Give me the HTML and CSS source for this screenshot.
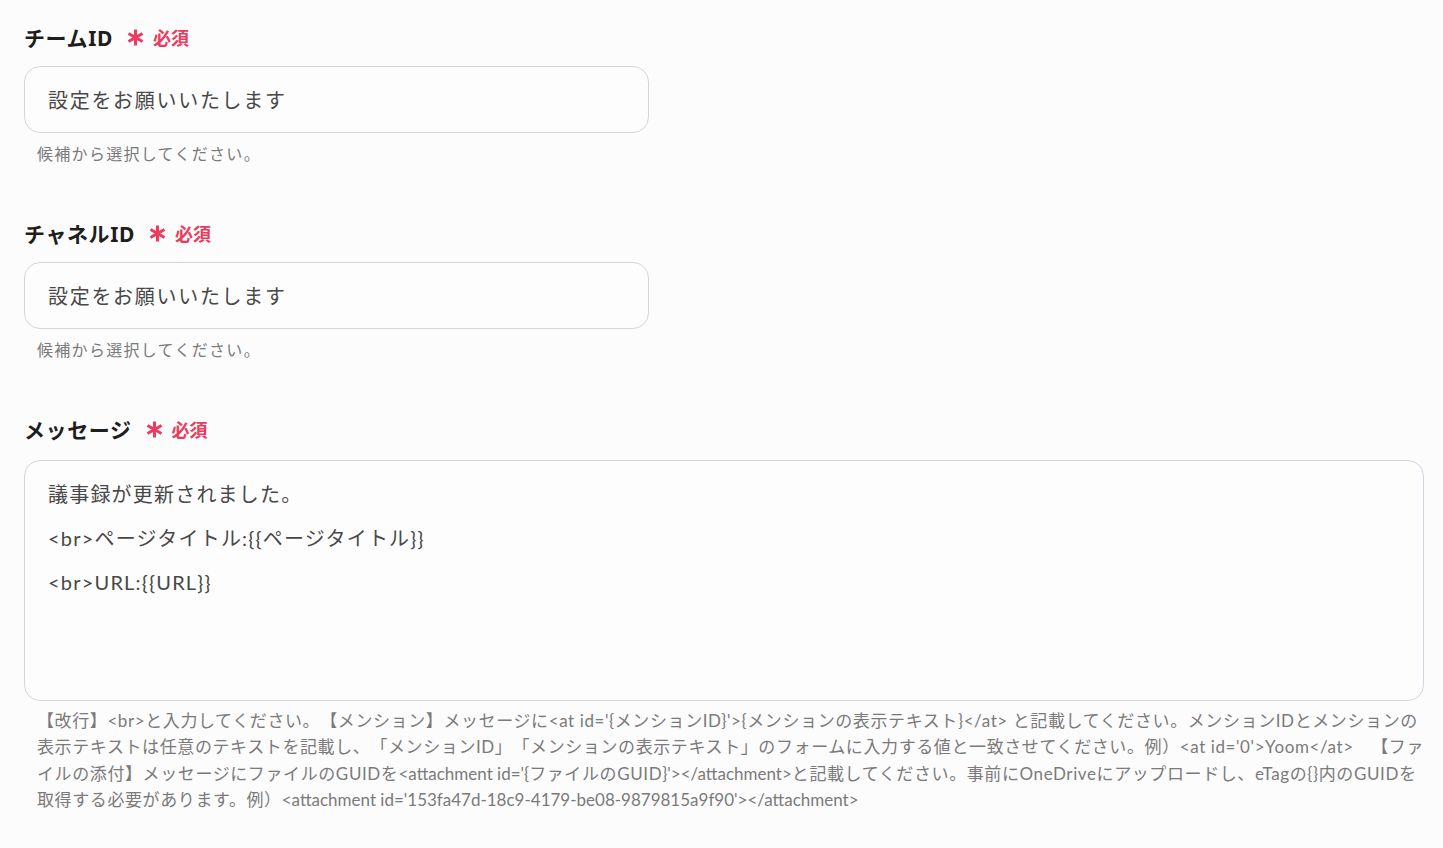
FILE: index.html
```html
<!DOCTYPE html>
<html lang="ja">
<head>
  <meta charset="UTF-8" />
  <meta name="viewport" content="width=device-width, initial-scale=1.0" />
  <title>Teams メッセージ設定</title>
  <link rel="stylesheet" href="styles.css">
</head>
<body>
  <div class="form">

    <div class="field">
      <div class="label">
        <span class="label-text">チームID</span>
        <span class="required">
          <svg class="star" viewBox="0 0 20 20"><path d="M10 1.5v17M2.6 5.75l14.8 8.5M2.6 14.25l14.8-8.5"/></svg>
          必須
        </span>
      </div>
      <div class="input">設定をお願いいたします</div>
      <p class="hint">候補から選択してください。</p>
    </div>

    <div class="field">
      <div class="label">
        <span class="label-text">チャネルID</span>
        <span class="required">
          <svg class="star" viewBox="0 0 20 20"><path d="M10 1.5v17M2.6 5.75l14.8 8.5M2.6 14.25l14.8-8.5"/></svg>
          必須
        </span>
      </div>
      <div class="input">設定をお願いいたします</div>
      <p class="hint">候補から選択してください。</p>
    </div>

    <div class="field">
      <div class="label">
        <span class="label-text">メッセージ</span>
        <span class="required">
          <svg class="star" viewBox="0 0 20 20"><path d="M10 1.5v17M2.6 5.75l14.8 8.5M2.6 14.25l14.8-8.5"/></svg>
          必須
        </span>
      </div>
      <div class="textarea">
        <div class="line">議事録が更新されました。</div>
        <div class="line">&lt;br&gt;ページタイトル:{{ページタイトル}}</div>
        <div class="line">&lt;br&gt;URL:{{URL}}</div>
      </div>
      <p class="hint hint-long">【改行】&lt;br&gt;と入力してください。【メンション】メッセージに&lt;at id='{メンションID}'&gt;{メンションの表示テキスト}&lt;/at&gt; と記載してください。メンションIDとメンションの表示テキストは任意のテキストを記載し、「メンションID」「メンションの表示テキスト」のフォームに入力する値と一致させてください。例）&lt;at id='0'&gt;Yoom&lt;/at&gt;　【ファイルの添付】メッセージにファイルのGUIDを<span class="tag">&lt;attachment id='{</span>ファイルのGUID<span class="tag">}'&gt;&lt;/attachment&gt;</span>と記載してください。事前にOneDriveにアップロードし、eTagの{}内のGUIDを取得する必要があります。例）<span class="tag">&lt;attachment id='153fa47d-18c9-4179-be08-9879815a9f90'&gt;&lt;/attachment&gt;</span></p>
    </div>

  </div>
</body>
</html>
```

FILE: styles.css
```css
:root {
  --bg: #fdfcfd;
  --field-bg: #fefdfe;
  --border: #d6d5df;
  --label: #1e1e1e;
  --text: #484848;
  --hint: #7a7a7a;
  --red: #eb3b5e;
}

html, body {
  margin: 0;
  padding: 0;
  background: var(--bg);
}

body {
  font-family: "Noto Sans", "Noto Sans CJK JP", sans-serif;
  color: var(--text);
  text-spacing-trim: space-all;
}

.form {
  padding: 22px 20px 0 24px;
}

.field {
  margin-bottom: 52px;
}

.label {
  display: flex;
  align-items: center;
  height: 30px;
}

.label-text {
  font-size: 21px;
  font-weight: 700;
  color: var(--label);
  letter-spacing: 0.6px;
}

.required {
  display: flex;
  align-items: center;
  margin-left: 13px;
  font-size: 18px;
  font-weight: 700;
  color: var(--red);
}

.star {
  width: 19px;
  height: 19px;
  margin-right: 8px;
  fill: none;
  stroke: var(--red);
  stroke-width: 3.2;
  stroke-linecap: butt;
}

.input {
  margin-top: 14px;
  width: 625px;
  height: 67px;
  box-sizing: border-box;
  padding: 0 23px;
  display: flex;
  align-items: center;
  font-size: 20px;
  letter-spacing: 1.7px;
  color: var(--text);
  background: var(--field-bg);
  border: 1px solid var(--border);
  border-radius: 16px;
}

.textarea {
  margin-top: 16px;
  width: 1400px;
  height: 241px;
  box-sizing: border-box;
  padding: 11px 23px;
  font-family: Lato, "Noto Sans CJK JP", sans-serif;
  font-size: 20px;
  letter-spacing: 1.2px;
  color: var(--text);
  background: var(--field-bg);
  border: 1px solid var(--border);
  border-radius: 16px;
}

.line {
  line-height: 44px;
}

.hint {
  margin: 9px 0 0;
  padding-left: 13px;
  font-size: 16px;
  letter-spacing: 1.3px;
  line-height: 24px;
  color: var(--hint);
}

.hint-long {
  margin-top: 7px;
  line-height: 26.3px;
  width: 1395px;
  font-family: Lato, "Noto Sans CJK JP", sans-serif;
  font-size: 17px;
  letter-spacing: 0.6px;
}

.tag {
  letter-spacing: 0;
}
```
